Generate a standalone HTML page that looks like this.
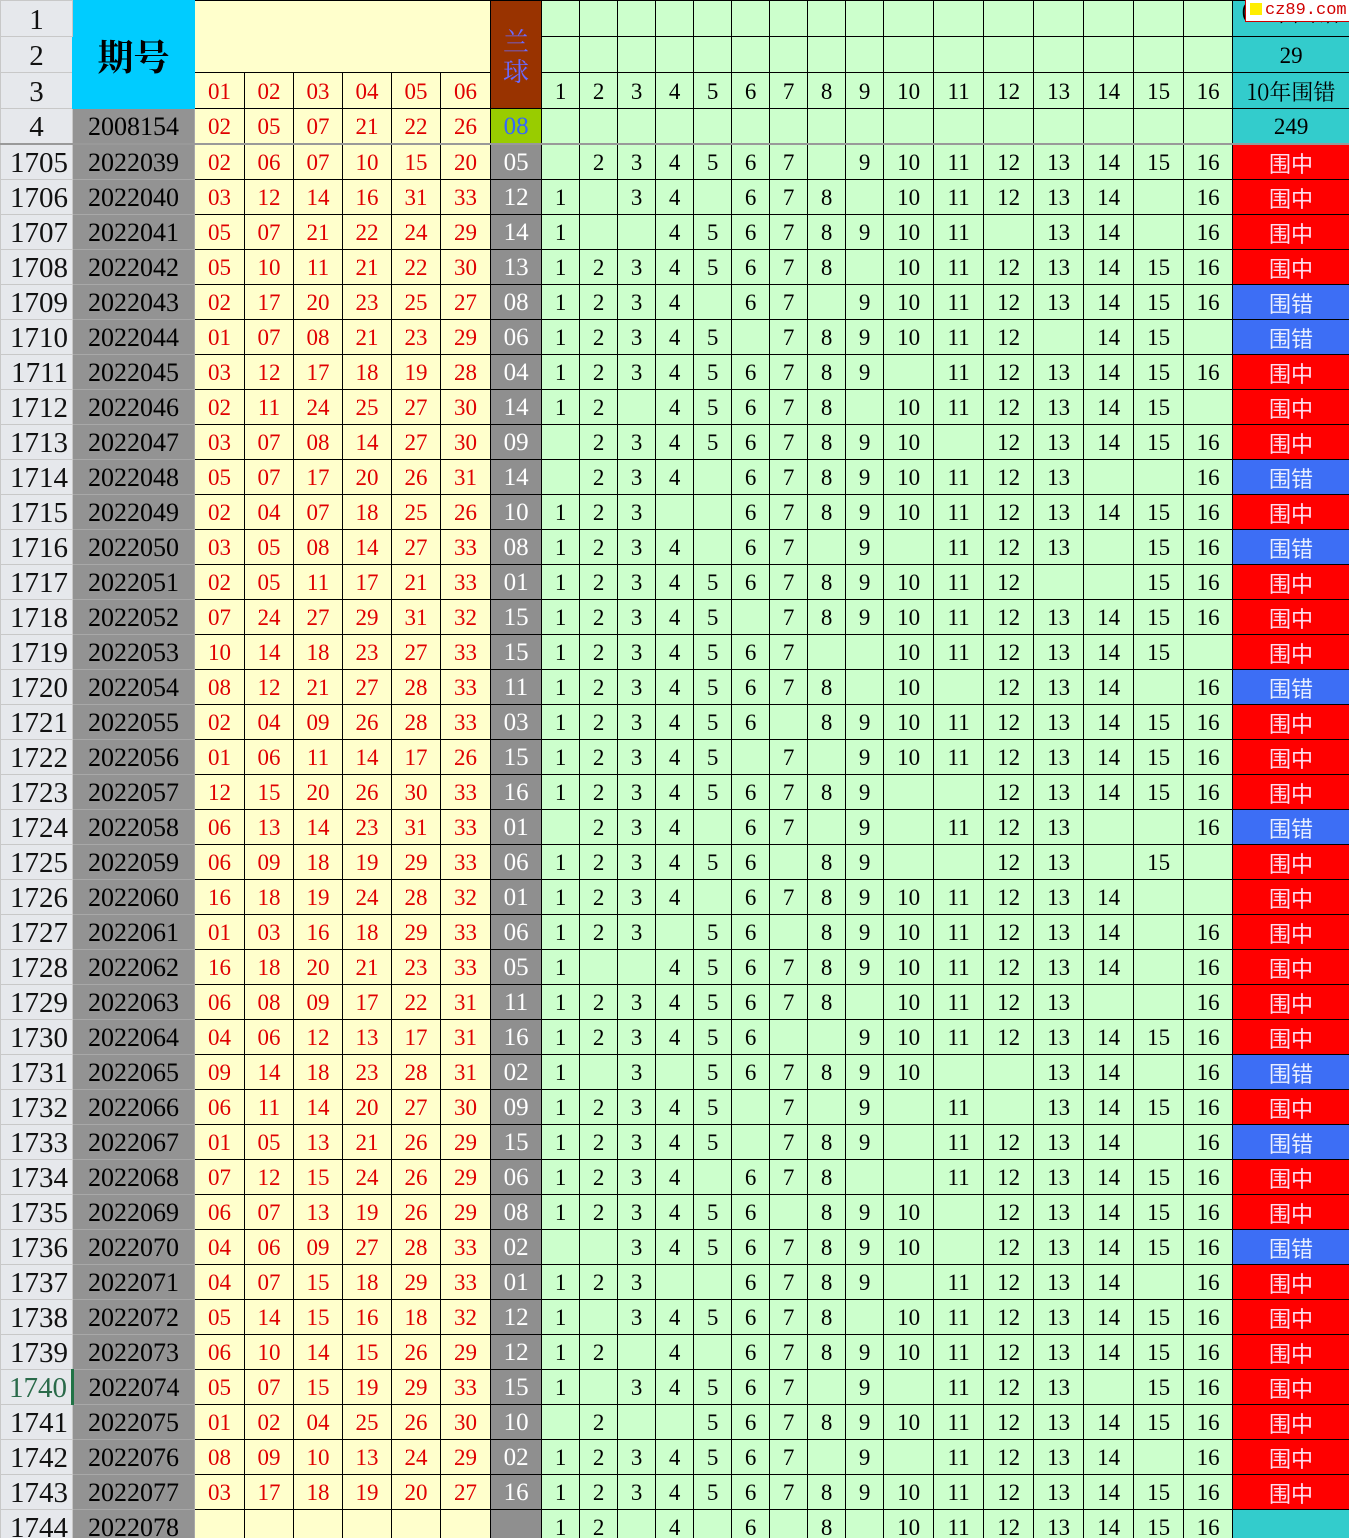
<!DOCTYPE html>
<html><head><meta charset="utf-8">
<style>
html,body{margin:0;padding:0;width:1349px;height:1538px;overflow:hidden;background:#ccffcc;}
table{border-collapse:collapse;table-layout:fixed;width:1349px;font-family:"Liberation Serif","Noto Serif CJK SC",serif;font-size:23px;}
td{padding:0;text-align:center;border:1px solid #000;height:34px;overflow:hidden;white-space:nowrap;line-height:32px;padding-top:2px;box-sizing:border-box;}
td:nth-child(1){background:#e6e8ec;border:1px solid #c8c8c8;font-size:29px;text-align:right;padding-right:4px;color:#111;}
td:nth-child(2){background:#939393;border-color:#a8a8a8;font-size:26px;color:#000;}
td:nth-child(n+3):nth-child(-n+8){background:#ffffcc;color:#e00000;}
td:nth-child(9){background:#8f8f8f;color:#fff;font-size:25px;border-color:#000;}
td:nth-child(n+10){background:#ccffcc;color:#000;}
td.rn{background:#e6e8ec!important;border:1px solid #c8c8c8!important;font-size:29px!important;text-align:center!important;color:#111!important;padding-right:0!important}
td.g{background:#ccffcc!important;color:#000!important;font-size:23px!important;border-color:#000!important}
td.y{background:#ffffcc!important;color:#e00000!important;font-size:23px!important;border-color:#000!important}
td.r{background:#ff0000!important;color:#fde!important;font-family:"Noto Sans CJK SC",sans-serif;font-size:22px;line-height:30px}
td.b{background:#3d6ef5!important;color:#e8eeff!important;font-family:"Noto Sans CJK SC",sans-serif;font-size:22px;line-height:30px}
td.t{background:#33cccc!important;color:#000!important;font-size:23px!important;border-color:#000!important}
tr.h td{height:36px;}
tr.sep td{border-top:2px solid #999;}
</style></head><body>
<table>
<colgroup><col style="width:72px"><col style="width:122px"><col style="width:50px"><col style="width:49px"><col style="width:49px"><col style="width:49px"><col style="width:49px"><col style="width:50px"><col style="width:51px"><col style="width:38px"><col style="width:38px"><col style="width:38px"><col style="width:38px"><col style="width:38px"><col style="width:38px"><col style="width:38px"><col style="width:38px"><col style="width:38px"><col style="width:50px"><col style="width:50px"><col style="width:50px"><col style="width:50px"><col style="width:50px"><col style="width:50px"><col style="width:49px"><col style="width:117px"></colgroup>
<tr class="h"><td class="rn">1</td><td rowspan="3" style="background:#00ccff;font-size:36px;font-family:'Noto Serif CJK SC',serif;font-weight:bold;border-color:#00ccff">期号</td><td colspan="6" rowspan="2" class="y"></td><td rowspan="3" style="background:#993300;color:#6a6aff;font-family:'Noto Serif CJK SC',serif;font-size:26px;line-height:30px;white-space:normal">兰<br>球</td><td class="g"></td><td class="g"></td><td class="g"></td><td class="g"></td><td class="g"></td><td class="g"></td><td class="g"></td><td class="g"></td><td class="g"></td><td class="g"></td><td class="g"></td><td class="g"></td><td class="g"></td><td class="g"></td><td class="g"></td><td class="g"></td><td class="t" style="font-family:'Noto Serif CJK SC',serif;font-size:24px!important;line-height:20px;vertical-align:top;padding-top:0">09年围错</td></tr>
<tr class="h"><td class="rn">2</td><td class="g"></td><td class="g"></td><td class="g"></td><td class="g"></td><td class="g"></td><td class="g"></td><td class="g"></td><td class="g"></td><td class="g"></td><td class="g"></td><td class="g"></td><td class="g"></td><td class="g"></td><td class="g"></td><td class="g"></td><td class="g"></td><td class="t">29</td></tr>
<tr class="h"><td class="rn">3</td><td class="y">01</td><td class="y">02</td><td class="y">03</td><td class="y">04</td><td class="y">05</td><td class="y">06</td><td class="g">1</td><td class="g">2</td><td class="g">3</td><td class="g">4</td><td class="g">5</td><td class="g">6</td><td class="g">7</td><td class="g">8</td><td class="g">9</td><td class="g">10</td><td class="g">11</td><td class="g">12</td><td class="g">13</td><td class="g">14</td><td class="g">15</td><td class="g">16</td><td class="t" style="font-family:'Noto Serif CJK SC',serif;font-size:22px!important">10年围错</td></tr>
<tr><td class="rn">4</td><td>2008154</td><td>02</td><td>05</td><td>07</td><td>21</td><td>22</td><td>26</td><td style="background:#99cc00;color:#3366ff">08</td><td></td><td></td><td></td><td></td><td></td><td></td><td></td><td></td><td></td><td></td><td></td><td></td><td></td><td></td><td></td><td></td><td class="t">249</td></tr>
<tr class="sep"><td>1705</td><td>2022039</td><td>02</td><td>06</td><td>07</td><td>10</td><td>15</td><td>20</td><td>05</td><td></td><td>2</td><td>3</td><td>4</td><td>5</td><td>6</td><td>7</td><td></td><td>9</td><td>10</td><td>11</td><td>12</td><td>13</td><td>14</td><td>15</td><td>16</td><td class="r">围中</td></tr>
<tr><td>1706</td><td>2022040</td><td>03</td><td>12</td><td>14</td><td>16</td><td>31</td><td>33</td><td>12</td><td>1</td><td></td><td>3</td><td>4</td><td></td><td>6</td><td>7</td><td>8</td><td></td><td>10</td><td>11</td><td>12</td><td>13</td><td>14</td><td></td><td>16</td><td class="r">围中</td></tr>
<tr><td>1707</td><td>2022041</td><td>05</td><td>07</td><td>21</td><td>22</td><td>24</td><td>29</td><td>14</td><td>1</td><td></td><td></td><td>4</td><td>5</td><td>6</td><td>7</td><td>8</td><td>9</td><td>10</td><td>11</td><td></td><td>13</td><td>14</td><td></td><td>16</td><td class="r">围中</td></tr>
<tr><td>1708</td><td>2022042</td><td>05</td><td>10</td><td>11</td><td>21</td><td>22</td><td>30</td><td>13</td><td>1</td><td>2</td><td>3</td><td>4</td><td>5</td><td>6</td><td>7</td><td>8</td><td></td><td>10</td><td>11</td><td>12</td><td>13</td><td>14</td><td>15</td><td>16</td><td class="r">围中</td></tr>
<tr><td>1709</td><td>2022043</td><td>02</td><td>17</td><td>20</td><td>23</td><td>25</td><td>27</td><td>08</td><td>1</td><td>2</td><td>3</td><td>4</td><td></td><td>6</td><td>7</td><td></td><td>9</td><td>10</td><td>11</td><td>12</td><td>13</td><td>14</td><td>15</td><td>16</td><td class="b">围错</td></tr>
<tr><td>1710</td><td>2022044</td><td>01</td><td>07</td><td>08</td><td>21</td><td>23</td><td>29</td><td>06</td><td>1</td><td>2</td><td>3</td><td>4</td><td>5</td><td></td><td>7</td><td>8</td><td>9</td><td>10</td><td>11</td><td>12</td><td></td><td>14</td><td>15</td><td></td><td class="b">围错</td></tr>
<tr><td>1711</td><td>2022045</td><td>03</td><td>12</td><td>17</td><td>18</td><td>19</td><td>28</td><td>04</td><td>1</td><td>2</td><td>3</td><td>4</td><td>5</td><td>6</td><td>7</td><td>8</td><td>9</td><td></td><td>11</td><td>12</td><td>13</td><td>14</td><td>15</td><td>16</td><td class="r">围中</td></tr>
<tr><td>1712</td><td>2022046</td><td>02</td><td>11</td><td>24</td><td>25</td><td>27</td><td>30</td><td>14</td><td>1</td><td>2</td><td></td><td>4</td><td>5</td><td>6</td><td>7</td><td>8</td><td></td><td>10</td><td>11</td><td>12</td><td>13</td><td>14</td><td>15</td><td></td><td class="r">围中</td></tr>
<tr><td>1713</td><td>2022047</td><td>03</td><td>07</td><td>08</td><td>14</td><td>27</td><td>30</td><td>09</td><td></td><td>2</td><td>3</td><td>4</td><td>5</td><td>6</td><td>7</td><td>8</td><td>9</td><td>10</td><td></td><td>12</td><td>13</td><td>14</td><td>15</td><td>16</td><td class="r">围中</td></tr>
<tr><td>1714</td><td>2022048</td><td>05</td><td>07</td><td>17</td><td>20</td><td>26</td><td>31</td><td>14</td><td></td><td>2</td><td>3</td><td>4</td><td></td><td>6</td><td>7</td><td>8</td><td>9</td><td>10</td><td>11</td><td>12</td><td>13</td><td></td><td></td><td>16</td><td class="b">围错</td></tr>
<tr><td>1715</td><td>2022049</td><td>02</td><td>04</td><td>07</td><td>18</td><td>25</td><td>26</td><td>10</td><td>1</td><td>2</td><td>3</td><td></td><td></td><td>6</td><td>7</td><td>8</td><td>9</td><td>10</td><td>11</td><td>12</td><td>13</td><td>14</td><td>15</td><td>16</td><td class="r">围中</td></tr>
<tr><td>1716</td><td>2022050</td><td>03</td><td>05</td><td>08</td><td>14</td><td>27</td><td>33</td><td>08</td><td>1</td><td>2</td><td>3</td><td>4</td><td></td><td>6</td><td>7</td><td></td><td>9</td><td></td><td>11</td><td>12</td><td>13</td><td></td><td>15</td><td>16</td><td class="b">围错</td></tr>
<tr><td>1717</td><td>2022051</td><td>02</td><td>05</td><td>11</td><td>17</td><td>21</td><td>33</td><td>01</td><td>1</td><td>2</td><td>3</td><td>4</td><td>5</td><td>6</td><td>7</td><td>8</td><td>9</td><td>10</td><td>11</td><td>12</td><td></td><td></td><td>15</td><td>16</td><td class="r">围中</td></tr>
<tr><td>1718</td><td>2022052</td><td>07</td><td>24</td><td>27</td><td>29</td><td>31</td><td>32</td><td>15</td><td>1</td><td>2</td><td>3</td><td>4</td><td>5</td><td></td><td>7</td><td>8</td><td>9</td><td>10</td><td>11</td><td>12</td><td>13</td><td>14</td><td>15</td><td>16</td><td class="r">围中</td></tr>
<tr><td>1719</td><td>2022053</td><td>10</td><td>14</td><td>18</td><td>23</td><td>27</td><td>33</td><td>15</td><td>1</td><td>2</td><td>3</td><td>4</td><td>5</td><td>6</td><td>7</td><td></td><td></td><td>10</td><td>11</td><td>12</td><td>13</td><td>14</td><td>15</td><td></td><td class="r">围中</td></tr>
<tr><td>1720</td><td>2022054</td><td>08</td><td>12</td><td>21</td><td>27</td><td>28</td><td>33</td><td>11</td><td>1</td><td>2</td><td>3</td><td>4</td><td>5</td><td>6</td><td>7</td><td>8</td><td></td><td>10</td><td></td><td>12</td><td>13</td><td>14</td><td></td><td>16</td><td class="b">围错</td></tr>
<tr><td>1721</td><td>2022055</td><td>02</td><td>04</td><td>09</td><td>26</td><td>28</td><td>33</td><td>03</td><td>1</td><td>2</td><td>3</td><td>4</td><td>5</td><td>6</td><td></td><td>8</td><td>9</td><td>10</td><td>11</td><td>12</td><td>13</td><td>14</td><td>15</td><td>16</td><td class="r">围中</td></tr>
<tr><td>1722</td><td>2022056</td><td>01</td><td>06</td><td>11</td><td>14</td><td>17</td><td>26</td><td>15</td><td>1</td><td>2</td><td>3</td><td>4</td><td>5</td><td></td><td>7</td><td></td><td>9</td><td>10</td><td>11</td><td>12</td><td>13</td><td>14</td><td>15</td><td>16</td><td class="r">围中</td></tr>
<tr><td>1723</td><td>2022057</td><td>12</td><td>15</td><td>20</td><td>26</td><td>30</td><td>33</td><td>16</td><td>1</td><td>2</td><td>3</td><td>4</td><td>5</td><td>6</td><td>7</td><td>8</td><td>9</td><td></td><td></td><td>12</td><td>13</td><td>14</td><td>15</td><td>16</td><td class="r">围中</td></tr>
<tr><td>1724</td><td>2022058</td><td>06</td><td>13</td><td>14</td><td>23</td><td>31</td><td>33</td><td>01</td><td></td><td>2</td><td>3</td><td>4</td><td></td><td>6</td><td>7</td><td></td><td>9</td><td></td><td>11</td><td>12</td><td>13</td><td></td><td></td><td>16</td><td class="b">围错</td></tr>
<tr><td>1725</td><td>2022059</td><td>06</td><td>09</td><td>18</td><td>19</td><td>29</td><td>33</td><td>06</td><td>1</td><td>2</td><td>3</td><td>4</td><td>5</td><td>6</td><td></td><td>8</td><td>9</td><td></td><td></td><td>12</td><td>13</td><td></td><td>15</td><td></td><td class="r">围中</td></tr>
<tr><td>1726</td><td>2022060</td><td>16</td><td>18</td><td>19</td><td>24</td><td>28</td><td>32</td><td>01</td><td>1</td><td>2</td><td>3</td><td>4</td><td></td><td>6</td><td>7</td><td>8</td><td>9</td><td>10</td><td>11</td><td>12</td><td>13</td><td>14</td><td></td><td></td><td class="r">围中</td></tr>
<tr><td>1727</td><td>2022061</td><td>01</td><td>03</td><td>16</td><td>18</td><td>29</td><td>33</td><td>06</td><td>1</td><td>2</td><td>3</td><td></td><td>5</td><td>6</td><td></td><td>8</td><td>9</td><td>10</td><td>11</td><td>12</td><td>13</td><td>14</td><td></td><td>16</td><td class="r">围中</td></tr>
<tr><td>1728</td><td>2022062</td><td>16</td><td>18</td><td>20</td><td>21</td><td>23</td><td>33</td><td>05</td><td>1</td><td></td><td></td><td>4</td><td>5</td><td>6</td><td>7</td><td>8</td><td>9</td><td>10</td><td>11</td><td>12</td><td>13</td><td>14</td><td></td><td>16</td><td class="r">围中</td></tr>
<tr><td>1729</td><td>2022063</td><td>06</td><td>08</td><td>09</td><td>17</td><td>22</td><td>31</td><td>11</td><td>1</td><td>2</td><td>3</td><td>4</td><td>5</td><td>6</td><td>7</td><td>8</td><td></td><td>10</td><td>11</td><td>12</td><td>13</td><td></td><td></td><td>16</td><td class="r">围中</td></tr>
<tr><td>1730</td><td>2022064</td><td>04</td><td>06</td><td>12</td><td>13</td><td>17</td><td>31</td><td>16</td><td>1</td><td>2</td><td>3</td><td>4</td><td>5</td><td>6</td><td></td><td></td><td>9</td><td>10</td><td>11</td><td>12</td><td>13</td><td>14</td><td>15</td><td>16</td><td class="r">围中</td></tr>
<tr><td>1731</td><td>2022065</td><td>09</td><td>14</td><td>18</td><td>23</td><td>28</td><td>31</td><td>02</td><td>1</td><td></td><td>3</td><td></td><td>5</td><td>6</td><td>7</td><td>8</td><td>9</td><td>10</td><td></td><td></td><td>13</td><td>14</td><td></td><td>16</td><td class="b">围错</td></tr>
<tr><td>1732</td><td>2022066</td><td>06</td><td>11</td><td>14</td><td>20</td><td>27</td><td>30</td><td>09</td><td>1</td><td>2</td><td>3</td><td>4</td><td>5</td><td></td><td>7</td><td></td><td>9</td><td></td><td>11</td><td></td><td>13</td><td>14</td><td>15</td><td>16</td><td class="r">围中</td></tr>
<tr><td>1733</td><td>2022067</td><td>01</td><td>05</td><td>13</td><td>21</td><td>26</td><td>29</td><td>15</td><td>1</td><td>2</td><td>3</td><td>4</td><td>5</td><td></td><td>7</td><td>8</td><td>9</td><td></td><td>11</td><td>12</td><td>13</td><td>14</td><td></td><td>16</td><td class="b">围错</td></tr>
<tr><td>1734</td><td>2022068</td><td>07</td><td>12</td><td>15</td><td>24</td><td>26</td><td>29</td><td>06</td><td>1</td><td>2</td><td>3</td><td>4</td><td></td><td>6</td><td>7</td><td>8</td><td></td><td></td><td>11</td><td>12</td><td>13</td><td>14</td><td>15</td><td>16</td><td class="r">围中</td></tr>
<tr><td>1735</td><td>2022069</td><td>06</td><td>07</td><td>13</td><td>19</td><td>26</td><td>29</td><td>08</td><td>1</td><td>2</td><td>3</td><td>4</td><td>5</td><td>6</td><td></td><td>8</td><td>9</td><td>10</td><td></td><td>12</td><td>13</td><td>14</td><td>15</td><td>16</td><td class="r">围中</td></tr>
<tr><td>1736</td><td>2022070</td><td>04</td><td>06</td><td>09</td><td>27</td><td>28</td><td>33</td><td>02</td><td></td><td></td><td>3</td><td>4</td><td>5</td><td>6</td><td>7</td><td>8</td><td>9</td><td>10</td><td></td><td>12</td><td>13</td><td>14</td><td>15</td><td>16</td><td class="b">围错</td></tr>
<tr><td>1737</td><td>2022071</td><td>04</td><td>07</td><td>15</td><td>18</td><td>29</td><td>33</td><td>01</td><td>1</td><td>2</td><td>3</td><td></td><td></td><td>6</td><td>7</td><td>8</td><td>9</td><td></td><td>11</td><td>12</td><td>13</td><td>14</td><td></td><td>16</td><td class="r">围中</td></tr>
<tr><td>1738</td><td>2022072</td><td>05</td><td>14</td><td>15</td><td>16</td><td>18</td><td>32</td><td>12</td><td>1</td><td></td><td>3</td><td>4</td><td>5</td><td>6</td><td>7</td><td>8</td><td></td><td>10</td><td>11</td><td>12</td><td>13</td><td>14</td><td>15</td><td>16</td><td class="r">围中</td></tr>
<tr><td>1739</td><td>2022073</td><td>06</td><td>10</td><td>14</td><td>15</td><td>26</td><td>29</td><td>12</td><td>1</td><td>2</td><td></td><td>4</td><td></td><td>6</td><td>7</td><td>8</td><td>9</td><td>10</td><td>11</td><td>12</td><td>13</td><td>14</td><td>15</td><td>16</td><td class="r">围中</td></tr>
<tr><td style="color:#2a6a4a;border-right:3px solid #217346">1740</td><td>2022074</td><td>05</td><td>07</td><td>15</td><td>19</td><td>29</td><td>33</td><td>15</td><td>1</td><td></td><td>3</td><td>4</td><td>5</td><td>6</td><td>7</td><td></td><td>9</td><td></td><td>11</td><td>12</td><td>13</td><td></td><td>15</td><td>16</td><td class="r">围中</td></tr>
<tr><td>1741</td><td>2022075</td><td>01</td><td>02</td><td>04</td><td>25</td><td>26</td><td>30</td><td>10</td><td></td><td>2</td><td></td><td></td><td>5</td><td>6</td><td>7</td><td>8</td><td>9</td><td>10</td><td>11</td><td>12</td><td>13</td><td>14</td><td>15</td><td>16</td><td class="r">围中</td></tr>
<tr><td>1742</td><td>2022076</td><td>08</td><td>09</td><td>10</td><td>13</td><td>24</td><td>29</td><td>02</td><td>1</td><td>2</td><td>3</td><td>4</td><td>5</td><td>6</td><td>7</td><td></td><td>9</td><td></td><td>11</td><td>12</td><td>13</td><td>14</td><td></td><td>16</td><td class="r">围中</td></tr>
<tr><td>1743</td><td>2022077</td><td>03</td><td>17</td><td>18</td><td>19</td><td>20</td><td>27</td><td>16</td><td>1</td><td>2</td><td>3</td><td>4</td><td>5</td><td>6</td><td>7</td><td>8</td><td>9</td><td>10</td><td>11</td><td>12</td><td>13</td><td>14</td><td>15</td><td>16</td><td class="r">围中</td></tr>
<tr><td>1744</td><td>2022078</td><td></td><td></td><td></td><td></td><td></td><td></td><td></td><td>1</td><td>2</td><td></td><td>4</td><td></td><td>6</td><td></td><td>8</td><td></td><td>10</td><td>11</td><td>12</td><td>13</td><td>14</td><td>15</td><td>16</td><td class="t"></td></tr>
</table>
<div style="position:absolute;left:1245px;top:0;width:103px;height:21px;background:#fff;border:1px solid #c00;border-top:none;font-family:'Liberation Mono',monospace;font-size:17px;line-height:21px;color:#d00000;white-space:nowrap;overflow:hidden"><span style="display:inline-block;width:12px;height:12px;background:#ffee00;margin:0 3px 0 4px;vertical-align:-1px"></span>cz89.com</div>
</body></html>
